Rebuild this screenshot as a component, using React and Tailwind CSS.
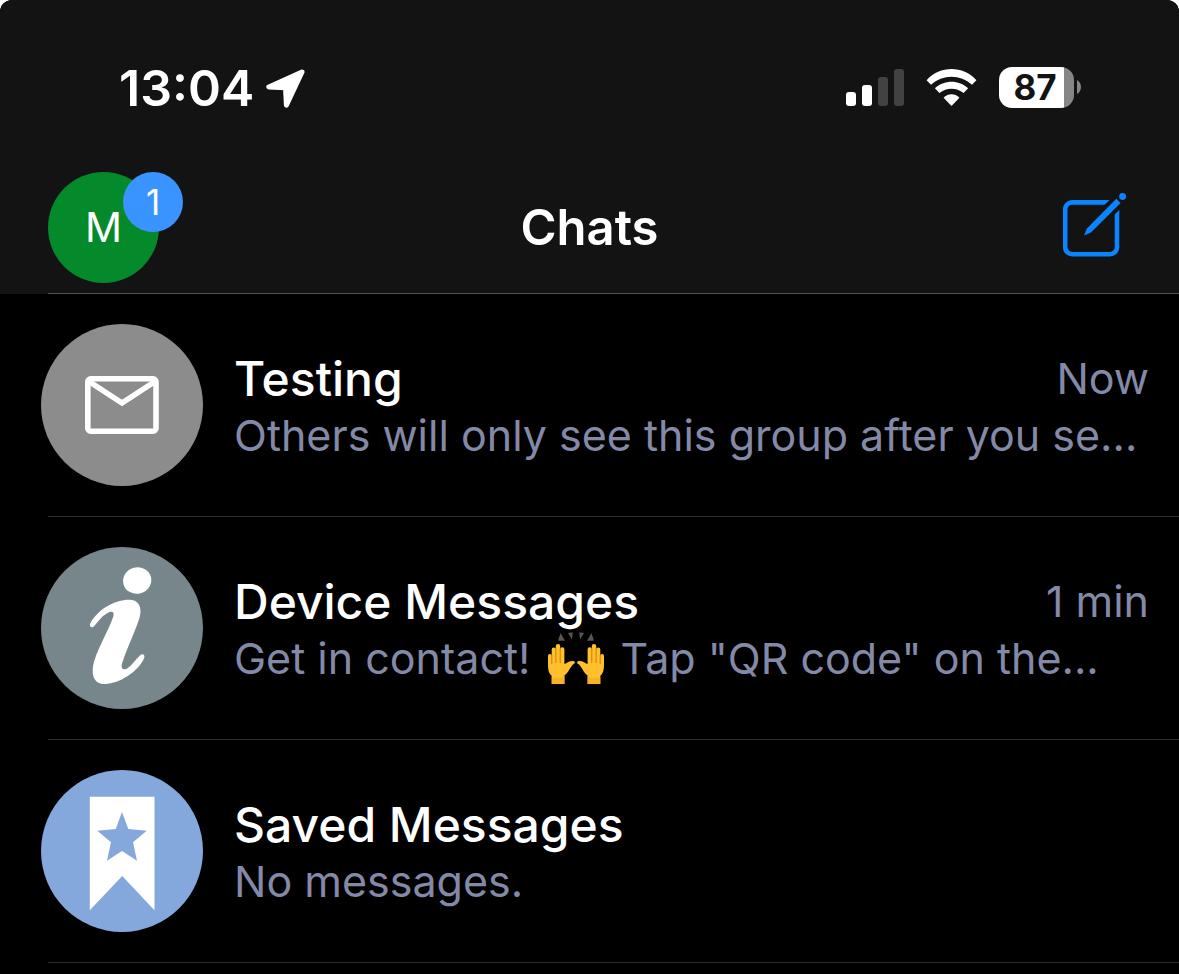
import React from 'react';

const SignalIcon = () => (
  <svg width="58" height="37" viewBox="0 0 58 37" role="img" aria-label="Signal: 2 of 4 bars">
    <rect x="0" y="23" width="10" height="14" rx="3" fill="#fff" />
    <rect x="16" y="16" width="10" height="21" rx="3" fill="#fff" />
    <rect x="32" y="8" width="10" height="29" rx="3" fill="#424242" />
    <rect x="48" y="0" width="10" height="37" rx="3" fill="#424242" />
  </svg>
);

const WifiIcon = () => (
  <svg width="51" height="37" viewBox="0 0 51 37" fill="#fff" role="img" aria-label="Wi-Fi">
    <path d="M.6 11.2C14-3.6 37-3.6 50.4 11.2L46 15.7C34.5 5 16.5 5 5 15.7Z" />
    <path d="M8.9 19.3C18 10.5 33 10.5 42.1 19.3L37.6 24.1C30.5 18.4 20.5 18.4 13.4 24.1Z" />
    <path d="M17.6 28.8C22 24.2 29 24.2 33.4 28.8L25.5 37Z" />
  </svg>
);

const LocationIcon = () => (
  <svg width="39" height="39" viewBox="0 0 39 39" role="img" aria-label="Location in use">
    <path
      d="M36 3 2.8 18 19.5 18.7 20.4 36.2Z"
      fill="#fff"
      stroke="#fff"
      strokeWidth="5"
      strokeLinejoin="round"
    />
  </svg>
);

const Battery = ({ level }) => (
  <div className="flex items-center gap-[3px]">
    <div className="flex h-[41px] w-[75px] items-center justify-center rounded-[13px] bg-linear-to-r from-white from-87% to-[#868686] to-87% pr-[3px] text-[35px] font-bold text-[#131313]">
      {level}
    </div>
    <svg width="4" height="14" viewBox="0 0 4 14" aria-hidden="true">
      <path d="M0 0Q4 2.5 4 7Q4 11.5 0 14Z" fill="#868686" />
    </svg>
  </div>
);

const ComposeIcon = () => (
  <svg width="68" height="70" viewBox="0 0 68 70" fill="none" aria-hidden="true">
    <rect x="2.2" y="9.4" width="51.8" height="51.8" rx="7" stroke="#0a84ff" strokeWidth="4.6" />
    <path d="M43 20.4 61 2.4" stroke="#131313" strokeWidth="14" />
    <path d="M21 42.5 23.9 35.400 53.3 5.800 57.600 10 28 39.600Z" fill="#0a84ff" />
    <circle cx="59.6" cy="3.5" r="3.4" fill="#0a84ff" />
  </svg>
);

const MailAvatar = () => (
  <svg className="size-[162px] shrink-0" viewBox="0 0 162 162" fill="none" aria-hidden="true">
    <circle cx="81" cy="81" r="81" fill="#8c8c8c" />
    <rect x="46.8" y="54.8" width="68.2" height="52.4" rx="3" stroke="#fff" strokeWidth="5.6" />
    <path d="M48 57.5 81 79 114 57.5" stroke="#fff" strokeWidth="5.6" />
  </svg>
);

const InfoAvatar = () => (
  <svg className="size-[162px] shrink-0" viewBox="0 0 162 162" aria-hidden="true">
    <circle cx="81" cy="81" r="81" fill="#76868b" />
    <g fill="#fff">
      <ellipse cx="96.2" cy="33.5" rx="14.2" ry="13.2" transform="rotate(-15 96.2 33.5)" />
      <path d="M49.2 76.5C57 62 74 52.8 88 52.8C98 52.8 101.5 60.5 98.5 71C94 85 86 101 81 116.5C79.8 120.5 81.5 123.8 85.7 121.7C90.5 119 95 112 99.7 107.8C102 106 104.5 108.2 103 111.5C97 124.5 79 136.5 64 137C54 137.3 50.5 130 52 119C55 104 67 85 72.3 69.5C73.5 65.5 71.7 64 68 65.3C61.5 68 57.5 74.5 52.8 79.5C50.8 81.5 47.8 79.7 49.2 76.5Z" />
    </g>
  </svg>
);

const BookmarkAvatar = () => (
  <svg className="size-[162px] shrink-0" viewBox="0 0 162 162" aria-hidden="true">
    <circle cx="81" cy="81" r="81" fill="#84a8dc" />
    <path d="M48.8 26.8H113.5V140.2L81.2 106 48.8 140.2Z" fill="#fff" />
    <path
      d="M81 42 87.3 59 105.7 60.7 92 72.3 96 90.7 81 81 66 90.7 70 72.3 56.3 60.7 74.7 59Z"
      fill="#84a8dc"
    />
  </svg>
);

const Hand = () => (
  <>
    <path
      d="M5.7 52V44C2.5 41 2 37 2 32V24Q2 22 3.8 22Q5.7 22 5.7 24V17.5Q5.7 15.5 7.7 15.5Q9.8 15.5 9.8 17.5V14Q9.8 12 12 12Q14.2 12 14.2 14V17.3Q14.2 15.3 16.3 15.3Q18.4 15.3 18.4 17.3V32C20.5 31.5 22 29.3 26 29C29.2 28.8 29.7 31 27.7 32C24 34.5 23 40.5 18.4 43.5V52Z"
      fill="#ffc02e"
    />
    <path d="M5.8 23V32M9.9 16.5V31M14.2 16.5V31" stroke="#c97d08" strokeWidth="1" fill="none" />
    <path d="M5.7 45Q12 48 18.4 44V52H5.7Z" fill="#f9b127" />
    <path d="M12 8.7 14.5 1 19 8.7ZM22 1 26.7 .3 26 7.7Z" fill="#565656" />
  </>
);

const RaisedHands = () => (
  <svg
    className="mx-[3px] -mt-3 inline-block h-[53px] w-[60px] align-[-11px]"
    viewBox="0 0 60 53"
    role="img"
    aria-label="Raising hands"
  >
    <Hand />
    <g transform="translate(60 0) scale(-1 1)">
      <Hand />
    </g>
  </svg>
);

const chats = [
  {
    name: 'Testing',
    time: 'Now',
    avatar: <MailAvatar />,
    preview: 'Others will only see this group after you se...',
  },
  {
    name: 'Device Messages',
    time: '1 min',
    avatar: <InfoAvatar />,
    preview: (
      <>
        Get in contact! <RaisedHands /> Tap "QR code" on the...
      </>
    ),
  },
  {
    name: 'Saved Messages',
    avatar: <BookmarkAvatar />,
    preview: 'No messages.',
  },
];

const ChatRow = ({ name, time, avatar, preview }) => (
  <li>
    <a href="#" className="flex items-center gap-[31px] py-[30px] pr-[30px] pl-[41px]">
      {avatar}
      <div className="min-w-0 flex-1 pt-1">
        <div className="flex justify-between leading-[57px]">
          <h2 className="text-[48px] font-medium text-white">{name}</h2>
          {time && <span className="text-[43px] text-[#8389a6]">{time}</span>}
        </div>
        <p className="h-[57px] text-[43px] leading-[57px] whitespace-nowrap text-[#8389a6]">{preview}</p>
      </div>
    </a>
    <div className="ml-12 h-px bg-[#2c2c2c]" />
  </li>
);

const App = () => {
  return (
    <div className="min-h-screen bg-white">
      <div className="min-h-screen overflow-hidden rounded-t-xl bg-black font-['Inter',sans-serif]">
        <header className="bg-[#131313] pt-14">
          {/* Status bar */}
          <div className="flex h-16 items-center justify-between pr-[98px] pl-[119px]">
            <div className="flex items-center gap-3">
              <span className="text-[50px] font-semibold text-white">13:04</span>
              <LocationIcon />
            </div>
            <div className="flex items-center gap-[22px] pb-0.5">
              <SignalIcon />
              <WifiIcon />
              <Battery level={87} />
            </div>
          </div>

          {/* Navigation bar */}
          <div className="mt-[52px] grid grid-cols-[1fr_auto_1fr] items-center px-12 pb-[10px]">
            <button
              aria-label="Account M, 1 unread"
              className="relative size-[111px] rounded-full bg-[#048a2b] text-[41px] text-white"
            >
              M
              <span className="absolute top-0 left-[75px] flex size-[60px] items-center justify-center rounded-full bg-[#3a94ff] text-[35px]">
                1
              </span>
            </button>
            <h1 className="text-[49px] font-semibold text-white">Chats</h1>
            <button aria-label="New chat" className="justify-self-end">
              <ComposeIcon />
            </button>
          </div>
          <div className="ml-12 h-px bg-[#545454]" />
        </header>

        <ul>
          {chats.map((chat) => (
            <ChatRow key={chat.name} {...chat} />
          ))}
        </ul>
      </div>
    </div>
  );
};

export default App;
